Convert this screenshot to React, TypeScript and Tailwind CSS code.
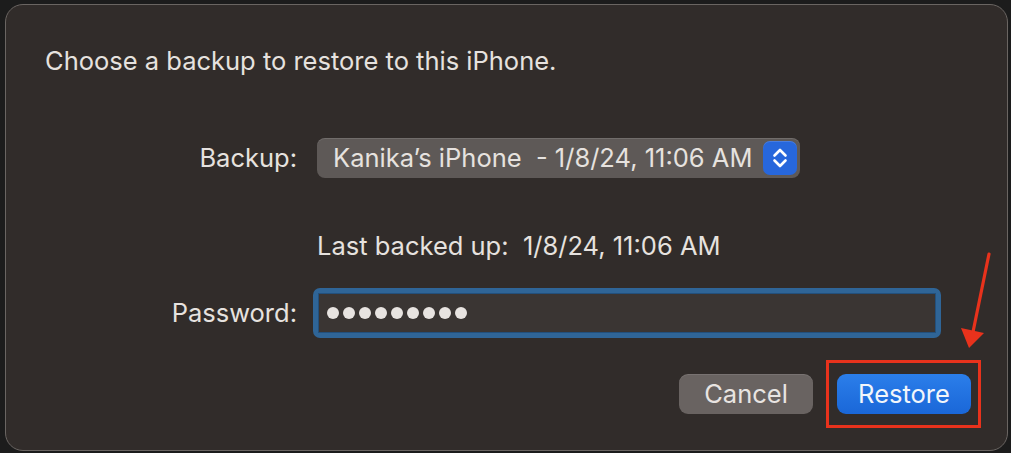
import React from 'react';

const font = { fontFamily: 'Inter, "Liberation Sans", sans-serif' };

const Stepper: React.FC = () => (
  <div className="flex h-[34px] w-[34px] items-center justify-center rounded-[7px] bg-[#2767dc] shadow-[inset_0_1px_0_rgba(255,255,255,0.15)]">
    <svg width="16" height="24" viewBox="0 0 16 24" fill="none" stroke="#ffffff" strokeWidth="2.6" strokeLinecap="round" strokeLinejoin="round">
      <path d="M2.5 9.5 L8 4 L13.5 9.5" />
      <path d="M2.5 14.5 L8 20 L13.5 14.5" />
    </svg>
  </div>
);

export default function App() {
  const dots = Array.from({ length: 9 });

  return (
    <div className="relative h-[453px] w-[1011px] overflow-hidden bg-[#1c1c1c] pb-[2px] pl-[5px] pr-[3px] pt-[4px]" style={font}>
      <div className="flex h-full flex-col rounded-[18px] border border-[#6a6562] bg-[#312c2a] text-[#e6e2df]">
        <h1 className="ml-[39px] mt-[42px] text-[25.5px] font-normal leading-[28px]">
          Choose a backup to restore to this iPhone.
        </h1>

        <div className="mt-[63px] flex h-[40px] items-center">
          <span className="w-[291px] text-right text-[25.5px] leading-[28px]">Backup:</span>
          <div className="ml-[20px] flex h-[40px] w-[483px] items-center justify-between rounded-[8px] bg-[#5e5957] pl-[16px] pr-[3px] shadow-[inset_0_1px_0_rgba(255,255,255,0.12)]">
            <span className="whitespace-pre text-[25.5px] leading-[28px]">Kanika’s iPhone  - 1/8/24, 11:06 AM</span>
            <Stepper />
          </div>
        </div>

        <div className="mt-[54px] flex">
          <span className="ml-[311px] whitespace-pre text-[25.5px] leading-[28px]">Last backed up:  1/8/24, 11:06 AM</span>
        </div>

        <div className="mt-[28px] flex h-[50px] items-center">
          <span className="w-[291px] text-right text-[25.5px] leading-[28px]">Password:</span>
          <div className="ml-[16px] h-[50px] w-[628px] rounded-[7px] bg-[#2f6597] p-[5px]">
            <div className="flex h-full items-center gap-[4px] border border-[#23507c] bg-[#3a3533] pl-[8px]">
              {dots.map((_, i) => (
                <span key={i} className="h-[12px] w-[12px] rounded-full bg-[#e8e4e1]" />
              ))}
            </div>
          </div>
        </div>

        <div className="mt-[36px] flex justify-end gap-[24px] pr-[36px]">
          <button className="h-[40px] w-[134px] rounded-[9px] bg-[#696361] text-[25.5px] leading-[28px] text-[#e8e4e1] shadow-[inset_0_1px_0_rgba(255,255,255,0.1)]">
            Cancel
          </button>
          <button className="h-[40px] w-[134px] rounded-[9px] bg-gradient-to-b from-[#2b7eea] to-[#1a67d8] text-[25.5px] leading-[28px] text-[#f2f6fb]">
            Restore
          </button>
        </div>
      </div>

      <div className="pointer-events-none absolute left-[826px] top-[360px] h-[68px] w-[155px] border-[3px] border-[#e8321c]" />
      <svg className="pointer-events-none absolute left-[955px] top-[250px]" width="40" height="105" viewBox="0 0 40 105">
        <line x1="34" y1="4" x2="18" y2="82" stroke="#e8321c" strokeWidth="3.2" strokeLinecap="round" />
        <polygon points="14,98 6,78 29,83" fill="#e8321c" />
      </svg>
    </div>
  );
}
